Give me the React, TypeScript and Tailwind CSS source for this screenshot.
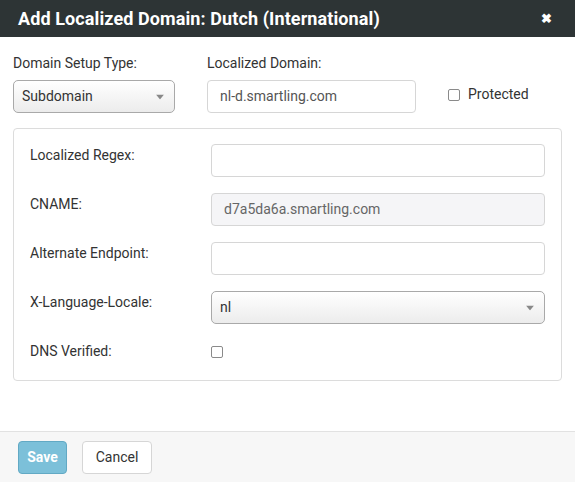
import React from "react";

const font = { fontFamily: "Roboto, 'Liberation Sans', sans-serif" };

function Caret() {
  return (
    <svg width="8" height="5" viewBox="0 0 8 5" className="absolute right-[10px] top-1/2 -translate-y-1/2">
      <path d="M0 0 H8 L4 5 Z" fill="#888" />
    </svg>
  );
}

function Check() {
  return <span className="inline-block h-[12px] w-[12px] rounded-[2px] border border-[#8a8a8a] bg-white" />;
}

function Row({ label, children }: { label: string; children: React.ReactNode }) {
  return (
    <div className="flex items-start">
      <div className="w-[181px] shrink-0 pt-[3px] text-[14px] leading-[17px] text-[#333]">{label}</div>
      <div className="flex-1">{children}</div>
    </div>
  );
}

export default function App() {
  return (
    <div className="flex h-[482px] w-[575px] flex-col bg-white" style={font}>
      <div className="flex h-[37px] shrink-0 items-center justify-between bg-[#2d3435] pl-[18px] pr-[23px]">
        <div className="text-[18px] font-bold tracking-[0.1px] text-white">Add Localized Domain: Dutch (International)</div>
        <div className="text-[13px] font-bold text-white">✖</div>
      </div>

      <div className="flex-1 px-[13px]">
        <div className="mt-[18px] flex items-start">
          <div className="w-[162px]">
            <div className="text-[14px] leading-[17px] text-[#333]">Domain Setup Type:</div>
            <div className="relative mt-[8px] flex h-[33px] items-center rounded-[5px] border border-[#a9a9a9] bg-gradient-to-b from-white to-[#ececec] pl-[8px] text-[14px] text-[#333]">
              Subdomain
              <Caret />
            </div>
          </div>
          <div className="ml-[32px] w-[209px]">
            <div className="text-[14px] leading-[17px] text-[#333]">Localized Domain:</div>
            <div className="mt-[8px] flex h-[33px] items-center rounded-[4px] border border-[#d6d6d6] bg-white pl-[12px] text-[14px] text-[#555]">
              nl-d.smartling.com
            </div>
          </div>
          <div className="ml-[32px] mt-[29px] flex items-center gap-[8px] text-[14px] text-[#333]">
            <Check />
            <span>Protected</span>
          </div>
        </div>

        <div className="mt-[15px] flex h-[253px] flex-col gap-[16px] rounded-[4px] border border-[#dcdcdc] px-[16px] pt-[15px]">
          <Row label="Localized Regex:">
            <div className="h-[33px] rounded-[4px] border border-[#d6d6d6] bg-white" />
          </Row>
          <Row label="CNAME:">
            <div className="flex h-[33px] items-center rounded-[4px] border border-[#d6d6d6] bg-[#f5f5f7] pl-[12px] text-[14px] text-[#666]">
              d7a5da6a.smartling.com
            </div>
          </Row>
          <Row label="Alternate Endpoint:">
            <div className="h-[33px] rounded-[4px] border border-[#d6d6d6] bg-white" />
          </Row>
          <Row label="X-Language-Locale:">
            <div className="relative flex h-[33px] items-center rounded-[5px] border border-[#a9a9a9] bg-gradient-to-b from-white to-[#ececec] pl-[8px] text-[14px] text-[#333]">
              nl
              <Caret />
            </div>
          </Row>
          <Row label="DNS Verified:">
            <div className="flex h-[17px] items-center pt-[6px]">
              <Check />
            </div>
          </Row>
        </div>
      </div>

      <div className="flex h-[51px] shrink-0 items-center gap-[15px] border-t border-[#e2e2e2] bg-[#f7f7f7] px-[18px]">
        <div className="flex h-[33px] w-[49px] items-center justify-center rounded-[4px] border border-[#62a9c4] bg-[#7cc0d9] text-[14px] font-bold text-white">
          Save
        </div>
        <div className="flex h-[33px] w-[70px] items-center justify-center rounded-[4px] border border-[#d6d6d6] bg-white text-[14px] text-[#333]">
          Cancel
        </div>
      </div>
    </div>
  );
}
